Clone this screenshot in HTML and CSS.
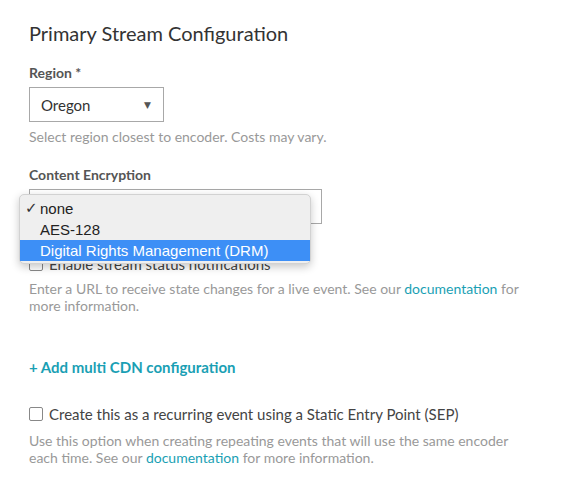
FILE: index.html
```html
<!DOCTYPE html>
<html>
<head>
<meta charset="utf-8">
<link rel="stylesheet" href="styles.css">
</head>
<body>
<div class="page">
  <h1 class="title">Primary Stream Configuration</h1>

  <div class="label label-first">Region *</div>
  <div class="select select-region">
    <span class="select-value">Oregon</span>
    <span class="select-arrow">&#9660;</span>
  </div>
  <p class="help help-region">Select region closest to encoder. Costs may vary.</p>

  <div class="label label-second">Content Encryption</div>
  <div class="field-enc">
    <div class="select select-enc"></div>
    <div class="menu">
      <div class="menu-item"><span class="check">&#10003;</span>none</div>
      <div class="menu-item">AES-128</div>
      <div class="menu-item menu-item-active">Digital Rights Management (DRM)</div>
    </div>
  </div>

  <label class="check-row check-row-status">
    <span class="box"></span>
    <span class="check-text">Enable stream status notifications</span>
  </label>
  <p class="help help-status">Enter a URL to receive state changes for a live event. See our <a class="link">documentation</a> for more information.</p>

  <a class="add-cdn">+ Add multi CDN configuration</a>

  <label class="check-row check-row-sep">
    <span class="box"></span>
    <span class="check-text">Create this as a recurring event using a Static Entry Point (SEP)</span>
  </label>
  <p class="help help-sep">Use this option when creating repeating events that will use the same encoder each time. See our <a class="link">documentation</a> for more information.</p>
</div>
</body>
</html>
```

FILE: styles.css
```css
* { box-sizing: border-box; }
html, body { margin: 0; padding: 0; background: #fff; }
body {
  font-family: Lato, "Open Sans", sans-serif;
  color: #444;
}
.page {
  padding: 21px 0 0 29px;
  display: flex;
  flex-direction: column;
  align-items: flex-start;
}
.title {
  margin: 0;
  font-size: 20px;
  font-weight: 400;
  line-height: 24px;
  color: #333;
}
.label {
  font-size: 14px;
  font-weight: 700;
  line-height: 18px;
  color: #555;
}
.label-first { margin-top: 19px; }
.label-second { margin-top: 20px; }
.select {
  margin-top: 5px;
  height: 35px;
  border: 1px solid #a8a8a8;
  background: #fff;
  display: flex;
  align-items: center;
}
.select-region {
  width: 135px;
  padding: 0 12px 0 11px;
  justify-content: space-between;
}
.select-value {
  font-size: 15px;
  color: #333;
}
.select-arrow {
  font-size: 9px;
  color: #555;
  font-family: "DejaVu Sans", sans-serif;
}
.help {
  margin: 0;
  font-size: 14px;
  line-height: 17px;
  color: #999;
  max-width: 500px;
}
.help-region { margin-top: 6px; line-height: 18px; }
.field-enc {
  position: relative;
}
.select-enc {
  width: 293px;
}
.menu {
  position: absolute;
  left: -10px;
  top: 10px;
  width: 292px;
  padding: 3px 0 2px;
  background: #efefef;
  border: 1px solid #d2d2d2;
  border-radius: 5px;
  box-shadow: 0 3px 9px rgba(0,0,0,0.22);
  font-family: "Liberation Sans", Arial, sans-serif;
  font-size: 15px;
  color: #222;
  z-index: 2;
}
.menu-item {
  height: 21px;
  line-height: 21px;
  padding-left: 20px;
  position: relative;
}
.menu-item-active {
  background: #3d8ff6;
  color: #fff;
}
.check {
  position: absolute;
  left: 5px;
  top: 0;
  font-family: "DejaVu Sans", sans-serif;
  font-size: 15px;
  font-weight: 700;
  color: #333;
}
.check-row {
  display: flex;
  align-items: center;
  gap: 6px;
  line-height: 20px;
  font-size: 15px;
  color: #444;
}
.check-row-status { margin-top: 30px; }
.check-row-sep { margin-top: 27px; }
.box {
  width: 14px;
  height: 14px;
  border: 1px solid #888;
  border-radius: 2px;
  background: #fff;
  flex: none;
}
.help-status { margin-top: 6px; }
.help-sep { margin-top: 8px; }
.link {
  color: #1a9fb4;
  text-decoration: none;
}
.add-cdn {
  margin-top: 43px;
  font-size: 15px;
  font-weight: 700;
  line-height: 20px;
  color: #1a9fb4;
  text-decoration: none;
}
```
